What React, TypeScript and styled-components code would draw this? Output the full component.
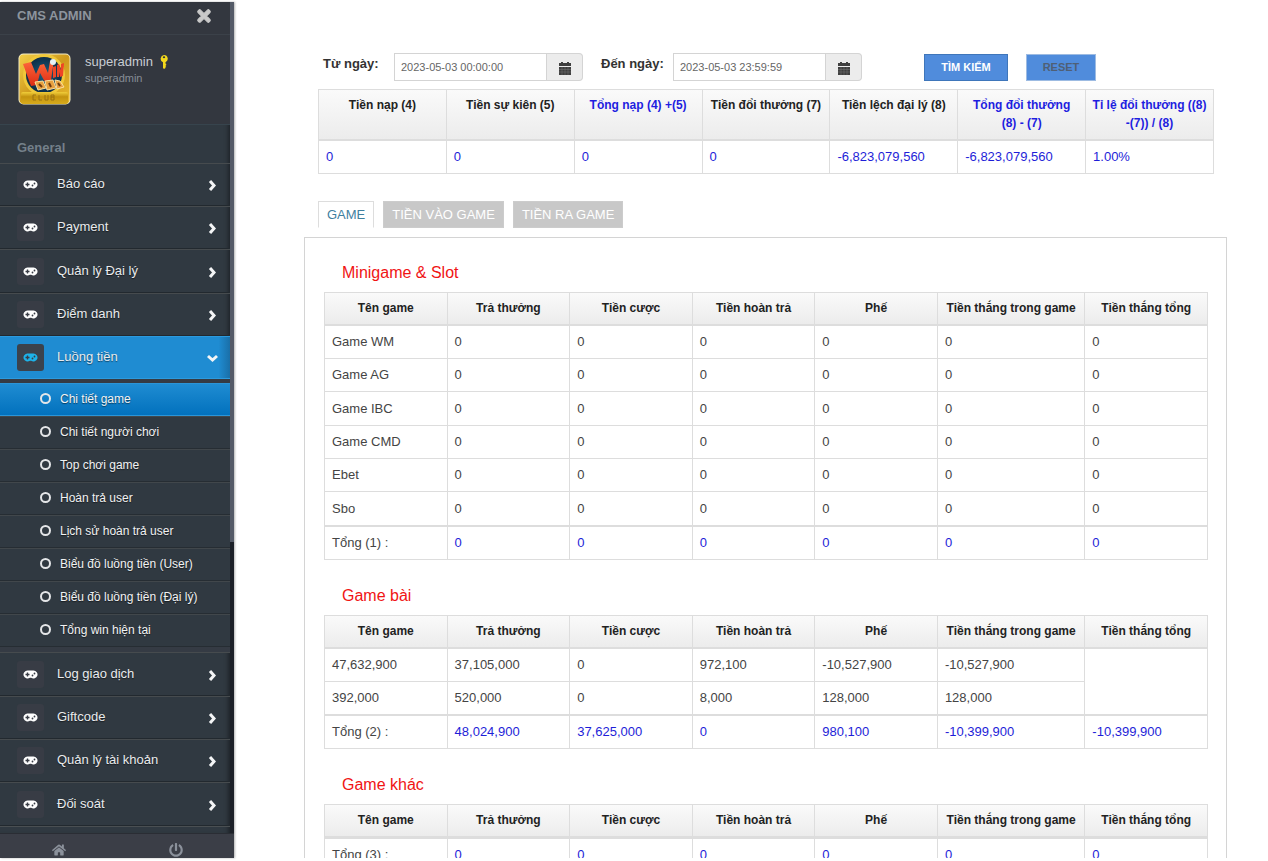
import React from 'react';
import styled, { createGlobalStyle, css } from 'styled-components';
import { FaTimes, FaHome, FaPowerOff } from 'react-icons/fa';

const GlobalStyle = createGlobalStyle`
  *, *::before, *::after { box-sizing: border-box; }
  html, body { margin: 0; background: #fff; }
  body, button, input { font-family: "Liberation Sans", Arial, sans-serif; }
  button { margin: 0; border: 0; cursor: pointer; }
  a { text-decoration: none; color: inherit; }
`;

const Shell = styled.div`
  display: grid;
  grid-template-columns: 234px minmax(0, 1fr);
  grid-template-rows: minmax(0, 1fr);
  height: 100vh;
  padding: 2px 0 3px;
`;

/* ---------- sidebar ---------- */

const Sidebar = styled.aside`
  display: flex;
  flex-direction: column;
  min-height: 0;
  background: #303941;
  color: #fff;
  box-shadow: 1px 0 2px rgba(0, 0, 0, 0.3);
`;

const SidebarBody = styled.div`
  flex: 1;
  min-height: 0;
  display: flex;
`;

const SidebarScroll = styled.div`
  flex: 1;
  min-width: 0;
  overflow: hidden;
  box-shadow: inset -5px 0 5px -4px rgba(0, 0, 0, 0.5);
`;

const Track = styled.div`
  width: 4px;
  background: #1c2028;
`;

const Thumb = styled.div`
  height: 65%;
  background: #545a67;
`;

const Brand = styled.div`
  display: flex;
  align-items: center;
  justify-content: space-between;
  height: 33px;
  padding: 0 17px 5px;
  background: #33373f;
  border-bottom: 1px solid #3b4149;
  color: #8d949d;
  font-size: 13px;
  font-weight: 700;
`;

const CloseButton = styled.button`
  display: flex;
  padding: 0;
  background: none;
  color: #c9c9c9;
  font-size: 18px;

  path {
    stroke: currentColor;
    stroke-width: 36;
  }
`;

const Profile = styled.div`
  display: flex;
  gap: 14px;
  height: 90px;
  padding: 18px 18px 0;
  background: #33373f;
  border-bottom: 1px solid #37444d;
`;

const ProfileText = styled.div`
  padding-top: 1px;
  font-size: 12px;
  line-height: 16px;
  color: #c8cdd3;
`;

const ProfileName = styled.div`
  display: flex;
  align-items: center;
  gap: 7px;
  font-size: 13px;
`;

const ProfileRole = styled.div`
  font-size: 11px;
  color: #868d96;
`;

const SectionLabel = styled.div`
  height: 38px;
  padding: 15px 17px 0;
  color: #74808a;
  font-size: 13px;
  line-height: 16px;
  font-weight: 700;
`;

const Menu = styled.ul`
  list-style: none;
  margin: 0;
  padding: 0;
  border-bottom: 1px solid #4a4f52;
`;

const MenuItem = styled.li`
  &:nth-child(3n) > a { height: 44px; }
`;

const MenuLink = styled.a<{ $active?: boolean }>`
  display: flex;
  align-items: center;
  height: 43px;
  padding: 0 13px 0 17px;
  border-top: 1px solid #464b4e;
  border-bottom: 1px solid #22292f;
  font-size: 13px;
  color: #e9ebed;
  text-shadow: 0 1px 1px rgba(0, 0, 0, 0.5);
  ${p => p.$active && css`
    background: linear-gradient(to right, #1f8cd2 95%, #1a6fa8);
    border-color: #2c9ade #2a6a96;
  `}
`;

const IconTile = styled.span<{ $active?: boolean }>`
  display: flex;
  align-items: center;
  justify-content: center;
  width: 27px;
  height: 27px;
  margin-right: 13px;
  border-radius: 3px;
  background: ${p => (p.$active ? '#3b424c' : '#383c45')};
  color: ${p => (p.$active ? '#1db3ea' : '#fff')};
`;

const MenuText = styled.span`
  flex: 1;
  padding-bottom: 2px;
`;

const Chevron = styled.svg`
  width: 9px;
  height: 9px;
  margin-top: 2px;
  overflow: visible;
  fill: none;
  stroke: #f4f5f6;
  stroke-width: 3;
`;

const SubMenu = styled.ul`
  list-style: none;
  margin: 0;
  padding: 4px 0 5px;
  background: #353b44;
`;

const SubLink = styled.a<{ $active?: boolean }>`
  display: flex;
  align-items: center;
  gap: 9px;
  height: 33px;
  padding: 0 0 2px 40px;
  background: #303941;
  border-top: 1px solid #41474b;
  border-bottom: 1px solid #262d33;
  font-size: 12px;
  color: #f1f2f3;
  text-shadow: 0 1px 1px rgba(0, 0, 0, 0.5);
  ${p => p.$active && css`
    background: linear-gradient(to bottom, #1f8cd2, #0271bd);
    border-color: #2b95d8 #0b5f9b;
  `}
`;

const Ring = styled.span`
  width: 11px;
  height: 11px;
  border: 2px solid #e4e6e8;
  border-radius: 50%;
`;

const SidebarFooter = styled.div`
  display: grid;
  grid-template-columns: 1fr 1fr;
  height: 25px;
  background: #3b3e47;
  border-top: 1px solid #2a2d34;
`;

const FooterButton = styled.button`
  display: flex;
  align-items: center;
  justify-content: center;
  padding: 7px 0 0;
  background: none;
  color: #8b919b;
  font-size: 14px;
`;

/* ---------- main area ---------- */

const Main = styled.main`
  min-width: 0;
  overflow-y: auto;
  scrollbar-width: none;
  padding: 51px 41px 0 70px;
`;

const Filters = styled.form`
  display: flex;
  align-items: center;
  height: 28px;
  padding-left: 19px;
`;

const Field = styled.div<{ $labelWidth: number }>`
  display: grid;
  grid-template-columns: ${p => p.$labelWidth}px 153px 36px;
  height: 28px;
  margin-right: 18px;
`;

const FieldLabel = styled.label`
  padding-top: 2px;
  color: #333;
  font-size: 13px;
  line-height: 18px;
  font-weight: 700;
`;

const DateInput = styled.input`
  min-width: 0;
  padding: 0 6px;
  border: 1px solid #d4d4d4;
  background: #fff;
  color: #666;
  font-size: 11px;
`;

const DateButton = styled.button`
  display: flex;
  align-items: center;
  justify-content: center;
  padding: 2px 0 0;
  border: 1px solid #d4d4d4;
  border-left: 0;
  border-radius: 0 4px 4px 0;
  background: #ececec;
`;

const ActionButton = styled.button<{ $muted?: boolean }>`
  width: ${p => (p.$muted ? 70 : 84)}px;
  height: 27px;
  padding: 0;
  border: 1px solid ${p => (p.$muted ? '#9dbbe2' : '#3f76ba')};
  background: #508cdc;
  color: ${p => (p.$muted ? '#4f5f75' : '#fff')};
  font-size: 11px;
  font-weight: 700;
`;

const Actions = styled.div`
  display: flex;
  gap: 18px;
  margin-left: 44px;
`;

const DataTable = styled.table`
  width: 100%;
  table-layout: fixed;
  border-collapse: separate;
  border-spacing: 0;
  border-top: 1px solid #ddd;
  border-left: 1px solid #ddd;
  font-size: 13px;
  line-height: 18px;
  color: #444;
`;

const HeadCell = styled.th<{ $blue?: boolean }>`
  height: 33px;
  padding: 6px 5px 7px;
  vertical-align: top;
  border-right: 1px solid #ddd;
  border-bottom: 2px solid #ddd;
  background: linear-gradient(to bottom, #fafafa, #ececec);
  color: ${p => (p.$blue ? '#1e1ee0' : '#222')};
  font-size: 12px;
  font-weight: 700;
  text-align: center;
`;

const Cell = styled.td<{ $blue?: boolean }>`
  height: 33px;
  padding: 0 7px;
  border-right: 1px solid #ddd;
  border-bottom: 1px solid #ddd;
  background: #fff;
  color: ${p => (p.$blue ? '#1e1ed8' : 'inherit')};
`;

const BodyRow = styled.tr`
  &:nth-child(3n) > td { height: 34px; }
`;

const TotalRow = styled.tr`
  > td {
    height: 34px;
    border-top: 1px solid #ddd;
  }
`;

const SummaryBox = styled.div`
  padding: 8px 13px 0 14px;
`;

const Tabs = styled.div`
  display: flex;
  gap: 9px;
  padding: 27px 13px 9px 14px;
`;

const Tab = styled.button<{ $active?: boolean }>`
  height: 27px;
  padding: 0 8px;
  border: 1px solid ${p => (p.$active ? '#ddd' : '#ccc')};
  ${p => p.$active && 'border-bottom-color: #fff;'}
  background: ${p => (p.$active ? '#fff' : '#c8c8c8')};
  color: ${p => (p.$active ? '#3f7f9f' : '#fff')};
  font-size: 13px;
`;

const Panel = styled.section`
  padding: 26px 18px 0 19px;
  border: 1px solid #d4d4d4;
`;

const GameTitle = styled.h2`
  margin: 0;
  padding: 0 18px 10px;
  color: #f01414;
  font-size: 16px;
  line-height: 18px;
  font-weight: 400;
`;

const GameBlock = styled.div`
  margin-bottom: 27px;
`;

/* ---------- drawings ---------- */

const Logo = () => (
  <svg width="53" height="52" viewBox="0 0 53 52" aria-label="Win Club">
    <defs>
      <linearGradient id="gold" x1="0" y1="0" x2="1" y2="1">
        <stop offset="0" stopColor="#f3cf48" />
        <stop offset="0.5" stopColor="#cf9a1c" />
        <stop offset="1" stopColor="#e8b92c" />
      </linearGradient>
      <linearGradient id="plate" x1="0" y1="0" x2="0" y2="1">
        <stop offset="0" stopColor="#f0cd3a" />
        <stop offset="0.4" stopColor="#c4930f" />
        <stop offset="1" stopColor="#d9ac1c" />
      </linearGradient>
      <radialGradient id="disc">
        <stop offset="0" stopColor="#1c5f7e" />
        <stop offset="1" stopColor="#0d2d47" />
      </radialGradient>
      <linearGradient id="red" x1="0" y1="0" x2="0" y2="1">
        <stop offset="0" stopColor="#ff6a3c" />
        <stop offset="1" stopColor="#dd2c14" />
      </linearGradient>
    </defs>
    <rect x="0.5" y="0.5" width="52" height="51" rx="5" fill="#f4ecc4" />
    <rect x="1.500" y="1.500" width="50" height="49" rx="4" fill="url(#gold)" />
    <circle cx="26" cy="22" r="21" fill="#f0c83a" />
    <circle cx="26" cy="22" r="18" fill="url(#disc)" />
    <path d="M5 11l8-2 5 12 4-9 4-1 4 9 2-12 4-1-3 20-6 2-5-9-3 12-6 1z" fill="url(#red)" />
    <path d="M35 14l3-1v11l-3 1zM39 24V12l2-1 2 6v-6l3-1-1 13-3 1-1-5v5z" fill="#ee4526" />
    <circle cx="35" cy="9" r="3" fill="#e6f2f6" />
    <path d="M17 29l8-1 3 7-8 2zM27 28l8-1 3 8-9 2zM37 27l5 1 4 6-7 2z" fill="#e8a040" stroke="#fbe0a0" strokeWidth="1" />
    <path d="M21 31l3 3M31 30l2 4M40 30l2 3" stroke="#6e3a0e" strokeWidth="2" />
    <rect x="3" y="39" width="47" height="12" rx="2" fill="url(#plate)" />
    <path d="M18 42h-3v5h3M21 42v5h3M27 42v5h3v-5M33 42v5h3v-5zM33 44h3" fill="none" stroke="#9a7210" strokeWidth="1" />
  </svg>
);

const KeyIcon = () => (
  <svg width="8" height="14" viewBox="0 0 8 14" aria-hidden="true">
    <path fillRule="evenodd" d="M4 0a4 3.800 0 0 1 1.500 7.200V8.500l1 .8-1 .9.800.8-.800.800V13L4 14l-1-1V7.200A4 3.800 0 0 1 4 0zm0 1.200a1.200 1 0 1 0 0 2 1.200 1 0 0 0 0-2z" fill="#f3d81c" />
  </svg>
);

const CalendarIcon = () => (
  <svg width="12" height="13" viewBox="0 0 12 13" aria-hidden="true">
    <path d="M0 1h12v3H0zM0 5h12v8H0z" fill="#3f3f3f" />
    <path d="M2 0h2v2H2zM8 0h2v2H8z" fill="#3f3f3f" />
    <path d="M0 7.500h12M0 10h12M3 5v8M6 5v8M9 5v8" stroke="#777" strokeWidth="0.500" />
  </svg>
);

const GamepadIcon = () => (
  <svg width="15" height="9" viewBox="0 0 15 9" aria-hidden="true">
    <path d="M4.500 0.500h6a4 4 0 1 1-2.400 7.200h-1.200A4 4 0 1 1 4.500 0.500z" fill="currentColor" />
    <path d="M4.500 2.500v4M2.500 4.500h4" stroke="#383c45" strokeWidth="1.400" />
    <circle cx="9.500" cy="5.500" r="0.900" fill="#383c45" />
    <circle cx="11.500" cy="3.500" r="0.900" fill="#383c45" />
  </svg>
);

/* ---------- data ---------- */

const menuBefore = ['Báo cáo', 'Payment', 'Quản lý Đại lý', 'Điểm danh'];
const menuAfter = ['Log giao dịch', 'Giftcode', 'Quản lý tài khoản', 'Đối soát'];
const subItems = [
  'Chi tiết game',
  'Chi tiết người chơi',
  'Top chơi game',
  'Hoàn trả user',
  'Lịch sử hoàn trả user',
  'Biểu đồ luồng tiền (User)',
  'Biểu đồ luồng tiền (Đại lý)',
  'Tổng win hiện tại',
];

const summary = [
  { title: 'Tiền nạp (4)', value: '0' },
  { title: 'Tiền sự kiên (5)', value: '0' },
  { title: 'Tổng nạp (4) +(5)', value: '0', blue: true },
  { title: 'Tiền đổi thưởng (7)', value: '0' },
  { title: 'Tiền lệch đại lý (8)', value: '-6,823,079,560' },
  { title: 'Tổng đổi thưởng (8)\u00a0-\u00a0(7)', value: '-6,823,079,560', blue: true },
  { title: 'Tỉ lệ đổi thưởng ((8) -(7)) / (8)', value: '1.00%', blue: true },
];

const gameColumns = ['Tên game', 'Trả thưởng', 'Tiền cược', 'Tiền hoàn trả', 'Phế', 'Tiền thắng trong game', 'Tiền thắng tổng'];

interface GameTableData {
  title: string;
  rows: string[][];
  total: string[];
}

const zeros = ['0', '0', '0', '0', '0', '0'];

const games: GameTableData[] = [
  {
    title: 'Minigame & Slot',
    rows: ['Game WM', 'Game AG', 'Game IBC', 'Game CMD', 'Ebet', 'Sbo'].map(n => [n, ...zeros]),
    total: ['Tổng (1) :', ...zeros],
  },
  {
    title: 'Game bài',
    rows: [
      ['47,632,900', '37,105,000', '0', '972,100', '-10,527,900', '-10,527,900'],
      ['392,000', '520,000', '0', '8,000', '128,000', '128,000'],
    ],
    total: ['Tổng (2) :', '48,024,900', '37,625,000', '0', '980,100', '-10,399,900', '-10,399,900'],
  },
  { title: 'Game khác', rows: [], total: ['Tổng (3) :', ...zeros] },
];

/* ---------- parts ---------- */

const MenuEntry = ({ label }: { label: string }) => (
  <MenuItem>
    <MenuLink href="#">
      <IconTile><GamepadIcon /></IconTile>
      <MenuText>{label}</MenuText>
      <Chevron viewBox="0 0 9 9" aria-hidden="true"><path d="M2 0l4 4.500-4 4.500" /></Chevron>
    </MenuLink>
  </MenuItem>
);

const DateField = ({ id, label, value, labelWidth }: { id: string; label: string; value: string; labelWidth: number }) => (
  <Field $labelWidth={labelWidth}>
    <FieldLabel htmlFor={id}>{label}</FieldLabel>
    <DateInput id={id} type="text" defaultValue={value} />
    <DateButton type="button" aria-label={`${label} lịch`}><CalendarIcon /></DateButton>
  </Field>
);

const GameTable = ({ data }: { data: GameTableData }) => (
  <GameBlock>
    <GameTitle>{data.title}</GameTitle>
    <DataTable>
      <colgroup>
        {gameColumns.map((c, i) => <col key={c} style={{ width: i === 5 ? '16.7%' : undefined }} />)}
      </colgroup>
      <thead>
        <tr>{gameColumns.map(c => <HeadCell key={c} scope="col">{c}</HeadCell>)}</tr>
      </thead>
      {data.rows.length > 0 && (
        <tbody>
          {data.rows.map((row, r) => (
            <BodyRow key={r}>
              {row.map((v, i) => <Cell key={i}>{v}</Cell>)}
              {r === 0 && row.length < gameColumns.length && <Cell rowSpan={data.rows.length} />}
            </BodyRow>
          ))}
        </tbody>
      )}
      <tfoot>
        <TotalRow>
          {data.total.map((v, i) => <Cell key={i} $blue={i > 0}>{v}</Cell>)}
        </TotalRow>
      </tfoot>
    </DataTable>
  </GameBlock>
);

export default function App() {
  return (
    <>
      <GlobalStyle />
      <Shell>
        <Sidebar>
          <SidebarBody>
            <SidebarScroll>
              <Brand>
                CMS ADMIN
                <CloseButton aria-label="Close"><FaTimes /></CloseButton>
              </Brand>
              <Profile>
                <Logo />
                <ProfileText>
                  <ProfileName>superadmin <KeyIcon /></ProfileName>
                  <ProfileRole>superadmin</ProfileRole>
                </ProfileText>
              </Profile>
              <SectionLabel>General</SectionLabel>
              <Menu>
                {menuBefore.map(m => <MenuEntry key={m} label={m} />)}
                <MenuItem>
                  <MenuLink href="#" $active>
                    <IconTile $active><GamepadIcon /></IconTile>
                    <MenuText>Luồng tiền</MenuText>
                    <Chevron viewBox="0 0 9 9" aria-hidden="true"><path d="M0 2l4.500 4 4.500-4" /></Chevron>
                  </MenuLink>
                  <SubMenu>
                    {subItems.map((s, i) => (
                      <li key={s}>
                        <SubLink href="#" $active={i === 0}><Ring />{s}</SubLink>
                      </li>
                    ))}
                  </SubMenu>
                </MenuItem>
                {menuAfter.map(m => <MenuEntry key={m} label={m} />)}
              </Menu>
            </SidebarScroll>
            <Track><Thumb /></Track>
          </SidebarBody>
          <SidebarFooter>
            <FooterButton aria-label="Home"><FaHome /></FooterButton>
            <FooterButton aria-label="Log out"><FaPowerOff /></FooterButton>
          </SidebarFooter>
        </Sidebar>

        <Main>
          <Filters>
            <DateField id="from" label="Từ ngày:" value="2023-05-03 00:00:00" labelWidth={71} />
            <DateField id="to" label="Đến ngày:" value="2023-05-03 23:59:59" labelWidth={72} />
            <Actions>
              <ActionButton type="button">TÌM KIẾM</ActionButton>
              <ActionButton type="reset" $muted>RESET</ActionButton>
            </Actions>
          </Filters>
          <SummaryBox>
            <DataTable>
              <thead>
                <tr>{summary.map(s => <HeadCell key={s.title} scope="col" $blue={s.blue}>{s.title}</HeadCell>)}</tr>
              </thead>
              <tbody>
                <tr>{summary.map(s => <Cell key={s.title} $blue>{s.value}</Cell>)}</tr>
              </tbody>
            </DataTable>
          </SummaryBox>
          <Tabs role="tablist">
            <Tab type="button" role="tab" aria-selected $active>GAME</Tab>
            <Tab type="button" role="tab" aria-selected={false}>TIỀN VÀO GAME</Tab>
            <Tab type="button" role="tab" aria-selected={false}>TIỀN RA GAME</Tab>
          </Tabs>
          <Panel>
            {games.map(g => <GameTable key={g.title} data={g} />)}
          </Panel>
        </Main>
      </Shell>
    </>
  );
}
